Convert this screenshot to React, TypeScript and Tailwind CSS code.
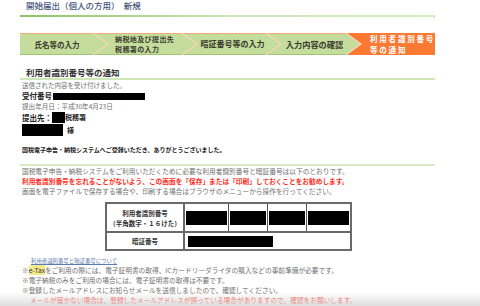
const steps = [
  { lines: ["氏名等の入力"], w: "w-[87px]", size: "text-[7.5px] leading-[11px]" },
  { lines: ["納税地及び提出先", "税務署の入力"], w: "w-[102px]", size: "text-[7px] leading-[10.2px] tracking-[0.4px]" },
  { lines: ["暗証番号等の入力"], w: "w-[97px]", size: "text-[8px] leading-[12px]" },
  { lines: ["入力内容の確認"], w: "w-[93px]", size: "text-[8.2px] leading-[12px]" },
];

function StepBar() {
  return (
    <div className="mt-[16px] flex h-[22px] bg-[#fbd3bb]">
      {steps.map((s, i) => (
        <div
          key={i}
          className={`${s.w} ${i === 0 ? "[clip-path:polygon(0_0,calc(100%_-_15px)_0,100%_50%,calc(100%_-_15px)_100%,0_100%)]" : "-ml-[13px] [clip-path:polygon(0_0,calc(100%_-_15px)_0,100%_50%,calc(100%_-_15px)_100%,0_100%,15px_50%)]"} flex h-full shrink-0 flex-col justify-center border-t border-t-[#f3a877] border-b-[1.5px] border-b-[#9fc472] bg-[#c4dd9d] ${i === 0 ? "pl-[2px] pr-[15px] items-center" : i === 1 ? "pl-[21px] pr-[14px] items-start" : "pl-[17px] pr-[15px] items-center"}`}
        >
          {s.lines.map((l) => (
            <span key={l} className={`${s.size} font-bold text-[#3b3b2e] whitespace-nowrap`}>
              {l}
            </span>
          ))}
        </div>
      ))}
      <div className="-ml-[13px] flex h-full flex-1 flex-col justify-center bg-[#fb7a33] pl-[23px] [clip-path:polygon(0_0,100%_0,100%_100%,0_100%,15px_50%)]">
        <span className="text-[7.5px] font-bold leading-[11px] tracking-[1.8px] text-white whitespace-nowrap">利用者識別番号</span>
        <span className="text-[7.5px] font-bold leading-[11px] tracking-[1.8px] text-white whitespace-nowrap">等の通知</span>
      </div>
    </div>
  );
}

function Redact({ className }: { className: string }) {
  return <span className={`inline-block bg-black ${className}`} />;
}

export default function App() {
  return (
    <div className="relative h-[306px] w-[480px] overflow-hidden bg-white font-['Noto_Sans_CJK_JP','Liberation_Sans',sans-serif]">
      <div className="ml-[20px] w-[415px]">
        <div className="pl-[6px] text-[8.5px] font-medium leading-[10px] text-[#44547c] whitespace-pre">
          開始届出（個人の方用）　新規
        </div>
        <div className="relative mt-[5px] h-[2px] bg-gradient-to-r from-[#8cc266] via-[#cde5b6] to-[#d6eac4]">
          <span className="absolute right-0 top-0 h-[4px] w-[1px] bg-[#cfe5b8]" />
        </div>

        <StepBar />

        <div className="mt-[12px] pl-[6px] text-[8.5px] font-bold leading-[11px] text-[#333]">
          利用者識別番号等の通知
        </div>
        <div className="h-[2px] bg-[#cfe6b6]" />

        <div className="pl-[2px]">
          <div className="flex h-[11px] items-center text-[6.5px] text-[#6f6f6f]">送信された内容を受け付けました。</div>
          <div className="flex h-[10px] items-center gap-[1px] text-[7.5px] font-bold text-[#222]">
            受付番号
            <Redact className="h-[7px] w-[92px]" />
          </div>
          <div className="flex h-[11px] items-center text-[6.6px] text-[#6f6f6f]">提出年月日：平成30年4月23日</div>
          <div className="flex h-[11px] items-center text-[7.5px] font-bold text-[#222]">
            提出先：
            <Redact className="h-[11px] w-[13px]" />
            <span className="text-[7px]">税務署</span>
          </div>
          <div className="mt-[1px] flex h-[12px] items-center gap-[4px] text-[7px] font-bold text-[#222]">
            <Redact className="h-[12px] w-[41px]" />
            様
          </div>
          <div className="mt-[8px] flex h-[10px] items-center text-[6px] font-bold text-[#222]">
            国税電子申告・納税システムへご登録いただき、ありがとうございました。
          </div>
        </div>

        <div className="mt-[10px] h-[2px] bg-[#d7eac5]" />

        <div className="pl-[2px] text-[6.7px] leading-[10px]">
          <p className="text-[#6f6f6f]">国税電子申告・納税システムをご利用いただくために必要な利用者識別番号と暗証番号は以下のとおりです。</p>
          <p className="font-bold text-[#ff2b22]">利用者識別番号を忘れることがないよう、この画面を「保存」または「印刷」しておくことをお勧めします。</p>
          <p className="text-[#6f6f6f]">画面を電子ファイルで保存する場合や、印刷する場合はブラウザのメニューから操作を行ってください。</p>
        </div>

        <table className="ml-[85px] mt-[6px] w-[247px] border-collapse border-2 border-[#6a6a6a] text-[6.5px] font-bold leading-[10px] text-[#333]">
          <tbody>
            <tr className="h-[29px]">
              <td className="w-[78px] border-2 border-[#6a6a6a] text-center">
                利用者識別番号
                <br />
                （半角数字・１６けた）
              </td>
              {[0, 1, 2, 3].map((i) => (
                <td key={i} className="border border-[#555] px-[1px]">
                  <div className="h-[14px] bg-black" />
                </td>
              ))}
            </tr>
            <tr className="h-[18px]">
              <td className="border-2 border-[#6a6a6a] text-center">暗証番号</td>
              <td colSpan={4} className="border-2 border-[#6a6a6a] pl-[3px]">
                <div className="h-[11px] w-[85px] bg-black" />
              </td>
            </tr>
          </tbody>
        </table>

        <div className="mt-[6px] pl-[11px] text-[5.4px] leading-[8px] text-[#5b7bb0] underline">
          利用者識別番号と暗証番号について
        </div>

        <div className="pl-[2px] text-[6.7px] leading-[10px] text-[#6f6f6f]">
          <p>
            ※<span className="bg-[#f4ea8c] text-[#333]">e-Tax</span>をご利用の際には、電子証明書の取得、ICカードリーダライタの購入などの事前準備が必要です。
          </p>
          <p>※電子納税のみをご利用の場合には、電子証明書の取得は不要です。</p>
          <p>※登録したメールアドレスにお知らせメールを送信しましたので、確認してください。</p>
          <p className="pl-[8px] text-[#ff3b30]">メールが届かない場合は、登録したメールアドレスが誤っている場合がありますので、確認をお願いします。</p>
        </div>
      </div>

      <div className="pointer-events-none absolute bottom-0 left-0 h-[14px] w-full bg-gradient-to-b from-white/0 to-[#d6d6d6]/80" />
    </div>
  );
}
